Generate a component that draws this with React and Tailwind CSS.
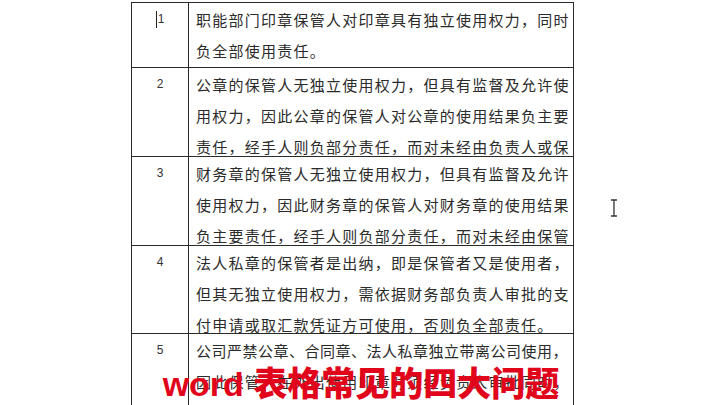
import React from "react";

const rows = [
  {
    no: "1",
    h: "h-[65px]",
    lines: ["职能部门印章保管人对印章具有独立使用权力，同时", "负全部使用责任。"],
    cursor: true,
  },
  {
    no: "2",
    h: "h-[89px]",
    lines: [
      "公章的保管人无独立使用权力，但具有监督及允许使",
      "用权力，因此公章的保管人对公章的使用结果负主要",
      "责任，经手人则负部分责任，而对未经由负责人或保",
    ],
  },
  {
    no: "3",
    h: "h-[89px]",
    lines: [
      "财务章的保管人无独立使用权力，但具有监督及允许",
      "使用权力，因此财务章的保管人对财务章的使用结果",
      "负主要责任，经手人则负部分责任，而对未经由保管",
    ],
  },
  {
    no: "4",
    h: "h-[88px]",
    lines: [
      "法人私章的保管者是出纳，即是保管者又是使用者，",
      "但其无独立使用权力，需依据财务部负责人审批的支",
      "付申请或取汇款凭证方可使用，否则负全部责任。",
    ],
  },
  {
    no: "5",
    h: "h-[90px]",
    lines: [
      "公司严禁公章、合同章、法人私章独立带离公司使用，",
      "因此保管人在外出使用印章时须经负责人审批同时，",
      "做好登记。",
    ],
  },
];

export default function App() {
  return (
    <div className="relative w-[720px] h-[405px] overflow-hidden bg-white">
      <div className="ml-[131px] mt-[2px] w-[443px] border border-b-0 border-[#2a2a2a]">
        {rows.map((r) => (
          <div key={r.no} className={`grid grid-cols-[57px_1fr] border-b border-[#2a2a2a] ${r.h} overflow-hidden`}>
            <div className="border-r border-[#2a2a2a] text-center pt-[1px] leading-[31px] text-[12px] text-[#333] font-['Liberation_Sans',sans-serif]">
              {r.cursor && <span className="inline-block w-[1px] h-[17px] bg-[#222] align-middle mr-[1px]" />}
              {r.no}
            </div>
            <div className="pl-[7px] pt-[1px] text-[15px] leading-[31px] tracking-[1.25px] text-[#2b2b2b] whitespace-nowrap font-['Noto_Sans_CJK_SC',sans-serif]">
              {r.lines.map((l, i) => (
                <div key={i} className={l.length > 23 ? "tracking-[0.5px]" : ""}>{l}</div>
              ))}
            </div>
          </div>
        ))}
      </div>

      {/* text cursor */}
      <svg className="absolute left-[609px] top-[199px]" width="10" height="18" viewBox="0 0 10 18">
        <path d="M2 1h6M5 1v16M2 17h6" stroke="#333" strokeWidth="1.3" fill="none" />
      </svg>

      {/* caption */}
      <div className="absolute left-0 right-0 bottom-[0px] pl-[2px] text-center text-[34px] leading-[42px] font-black text-[#e1051c] font-['Liberation_Sans','Noto_Sans_CJK_SC',sans-serif]">
        word 表格常见的四大问题
      </div>
    </div>
  );
}
